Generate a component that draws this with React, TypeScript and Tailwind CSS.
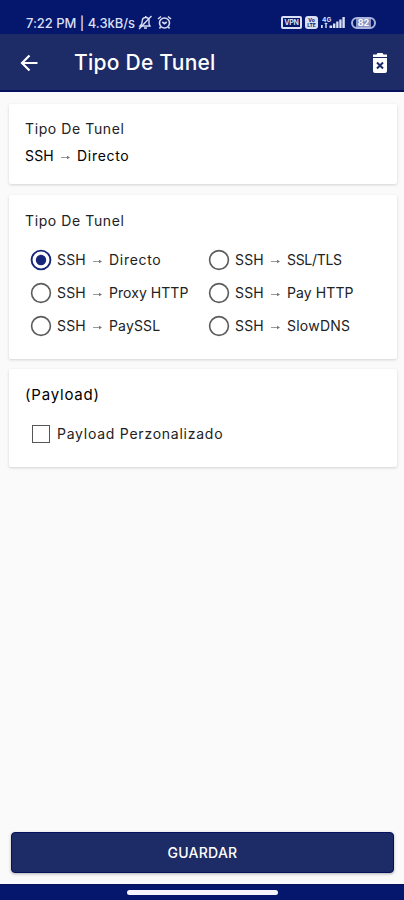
import React, { useState } from "react";

interface TunnelOption {
  id: string;
  label: string;
  spacing: string;
}

const tunnelOptions: TunnelOption[] = [
  { id: "direct", label: "Directo", spacing: "tracking-[0.7px]" },
  { id: "ssl", label: "SSL/TLS", spacing: "tracking-[-0.3px]" },
  { id: "proxy", label: "Proxy HTTP", spacing: "tracking-[0.05px]" },
  { id: "pay-http", label: "Pay HTTP", spacing: "tracking-[0.1px]" },
  { id: "pay-ssl", label: "PaySSL", spacing: "tracking-[0.15px]" },
  { id: "slow-dns", label: "SlowDNS", spacing: "tracking-[0.25px]" },
];

const SmallArrow = () => (
  <svg width="11" height="6" viewBox="0 0 11 6" className="shrink-0" aria-hidden="true">
    <path d="M1 2.500h7" stroke="#999" strokeWidth="1" />
    <path d="M7 .7l3 1.800-3 1.800z" fill="#777" />
  </svg>
);

const TunnelName: React.FC<{ label: string; spacing: string }> = ({ label, spacing }) => (
  <span className="flex items-center whitespace-nowrap">
    <span className="w-[35px] tracking-[0.2px]">SSH</span>
    <span className="w-[17px] pt-1">
      <SmallArrow />
    </span>
    <span className={spacing}>{label}</span>
  </span>
);

const StatusBar = () => (
  <div className="flex h-[34px] items-center bg-[#05176c] pt-[11px] pr-[28px] pl-[26px] text-[#d9dff5]">
    <span className="w-[112px] shrink-0 text-[13px] font-medium whitespace-nowrap tracking-[-0.03px]">
      7:22 PM | 4.3kB/s
    </span>
    {/* muted bell */}
    <svg className="shrink-0" width="15" height="15" viewBox="0 0 15 15" fill="none" stroke="currentColor" strokeWidth="1.4">
      <path d="M2 11h10l-1-2V5.500C11 3.500 9.700 2.500 7.700 2.500S4.500 3.500 4.300 5.500L3.700 9z" />
      <path d="M6 13h3M13.500 1L1 14M7.700 1v1.500" />
    </svg>
    {/* alarm */}
    <svg className="ml-[4px] shrink-0" width="15" height="15" viewBox="0 0 15 15" fill="none" stroke="currentColor" strokeWidth="1.6">
      <circle cx="7.500" cy="8" r="5" />
      <path d="M1 4l3-2.500M14 4l-3-2.500M5.300 7l2.200 1.700L9.700 7M3.500 12l-1 1.500M11.500 12l1 1.500" />
    </svg>
    <div className="ml-auto flex shrink-0 items-center">
      <span className="flex h-[13px] w-[21px] items-center justify-center rounded-[2px] border-2 border-current text-[7px] leading-none font-bold tracking-[-0.2px]">
        VPN
      </span>
      <span className="ml-[3px] flex h-[13px] w-[13px] flex-col items-center justify-center rounded-[3px] bg-[#d9dff5] text-[5px] leading-[5px] font-bold text-[#05176c]">
        <span>Vo</span>
        <span>LTE</span>
      </span>
      <svg className="ml-[2px]" width="26" height="15" viewBox="0 0 26 15" fill="currentColor">
        <text x="2" y="7" fontSize="6.500" fontWeight="bold" fontFamily="Inter, sans-serif">4G</text>
        <path d="M1 10h1.700v3H1zM4 9l2-1.500L8 9H6.700v4H5.300V9zM9.500 10.500H12.200V13H9.500zM13 8.500h2.400V13H13zM16.200 6.500h2.300V13h-2.300zM19.300 4.500h2.300V13h-2.300zM22.400 2h2.400v11h-2.400z" />
      </svg>
      <span className="ml-[5px] flex h-[12px] w-[25px] items-center justify-center rounded-full border-2 border-[#aab4dc]">
        <span className="flex h-[8px] w-[15px] items-center justify-center bg-[#8792c6] text-[9px] leading-none font-bold text-white">
          82
        </span>
      </span>
    </div>
  </div>
);

const Card: React.FC<{ className: string; children: React.ReactNode }> = ({ className, children }) => (
  <section className={`rounded-[2px] bg-white pl-[16px] shadow-[0_1px_3px_rgba(0,0,0,0.16)] ${className}`}>
    {children}
  </section>
);

export default function App() {
  const [selected, setSelected] = useState("direct");
  const [customPayload, setCustomPayload] = useState(false);

  return (
    <div className="flex h-[900px] w-[404px] flex-col overflow-hidden bg-[#fafafa] font-['Inter',sans-serif] text-[14px] leading-[20px] text-[#222]">
      <StatusBar />
      <header className="flex h-[58px] items-center border-b-2 border-[#07105a] bg-[#1d2b67] pt-[2px] pr-[16px] pl-[20px] text-white">
        <button type="button" aria-label="Volver">
          <svg width="19" height="20" viewBox="0 0 19 20" fill="none" stroke="currentColor" strokeWidth="2.200">
            <path d="M17.500 10H3M9.500 2.500L2 10l7.500 7.500" />
          </svg>
        </button>
        <h1 className="ml-[35px] text-[21px] leading-[28px] font-medium whitespace-nowrap tracking-[0.25px]">
          Tipo De Tunel
        </h1>
        <button type="button" aria-label="Borrar" className="ml-auto">
          <svg width="16" height="20" viewBox="0 0 16 20" fill="currentColor">
            <path d="M1 1.500h3.500L5.500 0h5l1 1.500H15V4H1zM1 5h14v13a2 2 0 0 1-2 2H3a2 2 0 0 1-2-2z" />
            <path d="M5 9.500l6 6M11 9.500l-6 6" stroke="#1d2b67" strokeWidth="2" />
          </svg>
        </button>
      </header>

      <main className="flex flex-1 flex-col px-[9px] pt-[12px] pr-[7px]">
        <Card className="h-[80px] pt-[15px]">
          <h2 className="tracking-[0.6px]">Tipo De Tunel</h2>
          <div className="mt-[7px] text-black">
            <TunnelName label="Directo" spacing="tracking-[0.7px]" />
          </div>
        </Card>

        <Card className="mt-[11px] h-[164px] pt-[16px]">
          <h2 className="tracking-[0.6px]">Tipo De Tunel</h2>
          <div className="mt-[12px] grid grid-cols-[178px_1fr] pl-[5px]">
            {tunnelOptions.map((option) => (
              <label key={option.id} className="flex h-[33px] cursor-pointer items-center">
                <input
                  type="radio"
                  name="tunnel"
                  className="sr-only"
                  checked={selected === option.id}
                  onChange={() => setSelected(option.id)}
                />
                <svg width="22" height="22" viewBox="0 0 22 22" fill="none" className="mr-[5px]">
                  <circle cx="11" cy="11" r="9.400" strokeWidth={selected === option.id ? 1.9 : 1.6} stroke={selected === option.id ? "#17257b" : "#5b5b5b"} />
                  {selected === option.id && <circle cx="11" cy="11" r="5.200" fill="#17257b" />}
                </svg>
                <TunnelName label={option.label} spacing={option.spacing} />
              </label>
            ))}
          </div>
        </Card>

        <Card className="mt-[10px] h-[98px] pt-[16px]">
          <h2 className="text-[15px] text-black tracking-[0.8px]">(Payload)</h2>
          <label className="mt-[19px] flex cursor-pointer items-center pl-[7px]">
            <input
              type="checkbox"
              className="sr-only"
              checked={customPayload}
              onChange={(e) => setCustomPayload(e.target.checked)}
            />
            <span className="mr-[7px] flex h-[18px] w-[18px] items-center justify-center border-[1.5px] border-[#555]">
              {customPayload && <span className="h-[10px] w-[10px] bg-[#17257b]" />}
            </span>
            <span className="whitespace-nowrap tracking-[0.75px]">Payload Perzonalizado</span>
          </label>
        </Card>

        <button
          type="button"
          className="mt-auto mr-[3px] mb-[11px] ml-[2px] h-[41px] rounded-[4px] border border-[#07105a] bg-[#1d2b67] pt-[1px] text-[14px] font-medium text-white shadow-[0_1px_3px_rgba(0,0,0,0.3)] tracking-[0.25px]"
        >
          GUARDAR
        </button>
      </main>

      <div className="flex h-[16px] justify-center border-t border-[#07105a] bg-[#05176c] pt-[5px]">
        <span className="h-[5px] w-[151px] rounded-full bg-[#f5f4ff]" />
      </div>
    </div>
  );
}
